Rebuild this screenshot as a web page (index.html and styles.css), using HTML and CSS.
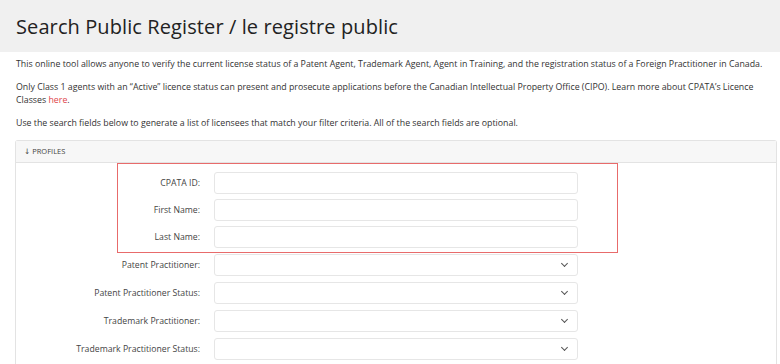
FILE: index.html
```html
<!DOCTYPE html>
<html lang="en">
<head>
    <meta charset="UTF-8">
    <meta name="viewport" content="width=device-width, initial-scale=1.0">
    <title>Search Public Register</title>
    <link rel="stylesheet" href="styles.css">
</head>
<body>
    <div class="page-header">
        <h1>Search Public Register / le registre public</h1>
    </div>

    <div class="intro">
        <p>This online tool allows anyone to verify the current license status of a Patent Agent, Trademark Agent, Agent in Training, and the registration status of a Foreign Practitioner in Canada.</p>
        <p>Only Class 1 agents with an “Active” licence status can present and prosecute applications before the Canadian Intellectual Property Office (CIPO). Learn more about CPATA’s Licence Classes <a href="#">here</a>.</p>
        <p>Use the search fields below to generate a list of licensees that match your filter criteria. All of the search fields are optional.</p>
    </div>

    <div class="panel">
        <div class="panel-heading">&#8595; PROFILES</div>
        <div class="panel-body">
            <!-- highlighted text fields -->
            <div class="field-group">
                <div class="field-row">
                    <label>CPATA ID:</label>
                    <input type="text" class="field-input">
                </div>
                <div class="field-row">
                    <label>First Name:</label>
                    <input type="text" class="field-input">
                </div>
                <div class="field-row">
                    <label>Last Name:</label>
                    <input type="text" class="field-input">
                </div>
            </div>

            <div class="field-row">
                <label>Patent Practitioner:</label>
                <div class="field-input select-box"><span class="chevron"></span></div>
            </div>
            <div class="field-row">
                <label>Patent Practitioner Status:</label>
                <div class="field-input select-box"><span class="chevron"></span></div>
            </div>
            <div class="field-row">
                <label>Trademark Practitioner:</label>
                <div class="field-input select-box"><span class="chevron"></span></div>
            </div>
            <div class="field-row">
                <label>Trademark Practitioner Status:</label>
                <div class="field-input select-box"><span class="chevron"></span></div>
            </div>
        </div>
    </div>
</body>
</html>
```

FILE: styles.css
```css
body {
    font-family: "Open Sans", "DejaVu Sans", sans-serif;
    margin: 0;
    padding: 0;
    background-color: #fff;
    color: #333;
}

.page-header {
    background-color: #f0f0f0;
    height: 52px;
    padding-left: 16px;
    box-sizing: border-box;
    display: flex;
    align-items: center;
}

.page-header h1 {
    margin: 0;
    font-size: 20px;
    font-weight: 400;
    color: #222;
    letter-spacing: 0.1px;
}

.intro {
    padding: 6px 16px 0 16px;
}

.intro p {
    margin: 0 0 10px 0;
    font-size: 8.8px;
    line-height: 13px;
    color: #333;
}

.intro a {
    color: #e0454b;
    text-decoration: none;
}

.panel {
    margin: 9px 3px 0 15px;
    border: 1px solid #e3e3e3;
    border-bottom: none;
    border-radius: 3px 3px 0 0;
}

.panel-heading {
    background-color: #f7f7f7;
    border-bottom: 1px solid #e3e3e3;
    height: 21px;
    padding-left: 8px;
    font-size: 7.5px;
    line-height: 21px;
    color: #444;
}

.panel-body {
    display: flex;
    flex-direction: column;
    padding-bottom: 10px;
}

.field-group {
    margin-left: 101px;
    margin-bottom: 1px;
    width: 501px;
    box-sizing: border-box;
    border: 1.5px solid #e86b6b;
    padding: 8px 39px 4px 0;
    display: flex;
    flex-direction: column;
    gap: 5px;
}

.field-row {
    display: grid;
    grid-template-columns: 1fr 364px;
    column-gap: 14px;
    align-items: center;
    width: 562px;
}

.panel-body > .field-row + .field-row {
    margin-top: 6px;
}

.field-group .field-row {
    width: 100%;
}

.field-row label {
    text-align: right;
    font-size: 8.7px;
    color: #444;
}

.field-input {
    height: 22px;
    box-sizing: border-box;
    border: 1px solid #e6e6e6;
    border-radius: 3px;
    background: #fff;
    margin: 0;
    padding: 0 8px;
}

.select-box {
    display: flex;
    align-items: center;
    justify-content: flex-end;
    padding-right: 10px;
}

.chevron {
    width: 4px;
    height: 4px;
    border-right: 1.2px solid #555;
    border-bottom: 1.2px solid #555;
    transform: rotate(45deg);
    margin-top: -3px;
}
```
